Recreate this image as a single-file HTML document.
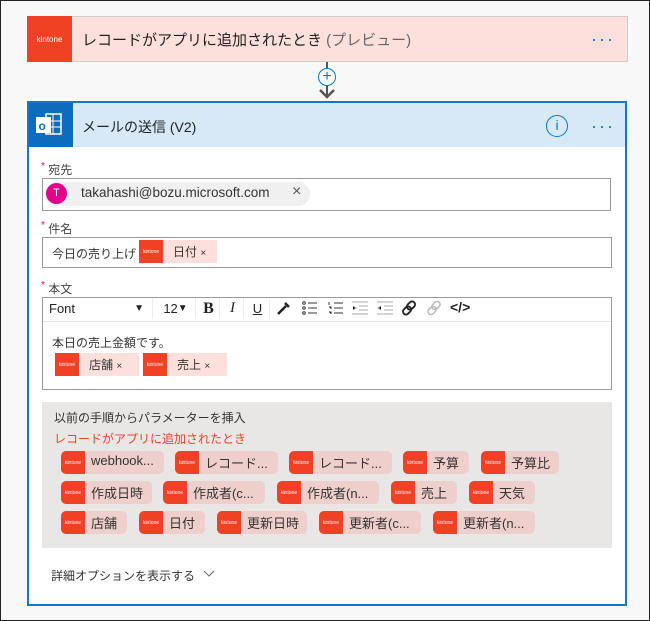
<!DOCTYPE html><html><head><meta charset="utf-8"><style>
*{box-sizing:border-box;margin:0;padding:0}
body{width:650px;height:621px;background:#f8f8f8;position:relative;font-family:"Liberation Sans","Noto Sans CJK JP",sans-serif;color:#333;overflow:hidden}
.a{position:absolute}
.kt{background:#f04125;color:#fff;font-size:5px;display:flex;align-items:center;justify-content:center}
.chip{position:absolute;height:23px;background:#efcfcb;border-radius:5px;overflow:hidden;font-size:13px;color:#333}
.chip .kt{position:absolute;left:0;top:0;width:24px;height:23px}
.chip span{position:absolute;left:30px;top:2px;white-space:nowrap}
.lbl{position:absolute;left:41px;font-size:12px;color:#444}
.lbl b{color:#e03;font-weight:normal;font-size:10px;vertical-align:top}
.tok{position:absolute;height:23px;background:#fde0dc;font-size:12px}
.tok .kt{position:absolute;left:0;top:0;width:24px;height:23px}
.tb{position:absolute;top:298px;height:21px;font-size:13px;color:#222;display:flex;align-items:center;justify-content:center;border-right:1px solid #eee}
</style></head><body>
<div class="a" style="left:0;top:0;width:650px;height:621px;border:1px solid #222"></div>
<div class="a" style="left:27px;top:16px;width:601px;height:46px;background:#fde0dc;border:1px solid #ccc"></div>
<div class="a kt" style="left:27px;top:16px;width:45px;height:46px;font-size:8px">kintone</div>
<div class="a" style="left:82px;top:29px;font-size:15px;color:#222">レコードがアプリに追加されたとき <span style="color:#666">(プレビュー)</span></div>
<div class="a" style="left:591px;top:29px;font-size:18px;color:#0078d4;letter-spacing:2px">···</div>
<div class="a" style="left:326px;top:62px;width:2px;height:34px;background:#555"></div>
<div class="a" style="left:318px;top:68px;width:18px;height:18px;border-radius:50%;border:1px solid #0078d4;background:#fff;color:#0078d4;font-size:16px;line-height:15px;text-align:center">+</div>
<svg class="a" style="left:318px;top:88px" width="18" height="12"><path d="M2 2l7 7 7-7" stroke="#555" stroke-width="2.5" fill="none"/></svg>
<div class="a" style="left:27px;top:101px;width:600px;height:505px;border:2px solid #0f78d4;background:#fff"></div>
<div class="a" style="left:29px;top:103px;width:596px;height:44px;background:#d7e8f7"></div>
<div class="a" style="left:29px;top:103px;width:44px;height:44px;background:#0f6cbd"></div>
<svg class="a" style="left:35px;top:111px" width="30" height="28"><rect x="11" y="3" width="15" height="20" fill="none" stroke="#fff" stroke-width="1.5"/><path d="M11 10h15M11 16h15M18 3v20" stroke="#fff"/><rect x="1" y="6" width="15" height="16" fill="#fff"/><text x="3.5" y="19" font-size="12" font-weight="bold" fill="#0f6cbd" font-family="Liberation Sans">o</text></svg>
<div class="a" style="left:82px;top:117px;font-size:14px;color:#222">メールの送信 (V2)</div>
<div class="a" style="left:546px;top:115px;width:22px;height:22px;border-radius:50%;border:1.5px solid #0078d4;color:#0078d4;font-size:14px;text-align:center;line-height:19px">i</div>
<div class="a" style="left:591px;top:116px;font-size:18px;color:#0078d4;letter-spacing:2px">···</div>
<div class="lbl" style="top:161px"><b>*</b> 宛先</div>
<div class="a" style="left:42px;top:178px;width:569px;height:33px;border:1px solid #999"></div>
<div class="a" style="left:45px;top:182px;width:265px;height:24px;background:#f0f0f0;border-radius:12px"></div>
<div class="a" style="left:46px;top:183px;width:21px;height:21px;border-radius:50%;background:#e3008c;color:#fff;font-size:11px;text-align:center;line-height:21px">T</div>
<div class="a" style="left:81px;top:185px;font-size:13.5px;color:#333">takahashi@bozu.microsoft.com</div>
<div class="a" style="left:292px;top:183px;font-size:16px;color:#555">×</div>
<div class="lbl" style="top:220px"><b>*</b> 件名</div>
<div class="a" style="left:42px;top:237px;width:570px;height:31px;border:1px solid #999"></div>
<div class="a" style="left:52px;top:245px;font-size:12px">今日の売り上げ</div>
<div class="tok" style="left:139px;top:240px;width:78px"><div class="kt">kintone</div><span class="a" style="left:34px;top:3px">日付 <small>×</small></span></div>
<div class="lbl" style="top:280px"><b>*</b> 本文</div>
<div class="a" style="left:42px;top:297px;width:570px;height:93px;border:1px solid #999"></div>
<div class="a" style="left:43px;top:321px;width:568px;height:1px;background:#e5e5e5"></div>
<div class="tb" style="left:43px;width:110px;justify-content:space-between;padding:0 8px 0 6px"><span>Font</span><span style="font-size:10px">▼</span></div>
<div class="tb" style="left:156px;width:40px">12 <span style="font-size:10px">▼</span></div>
<div class="tb" style="left:198px;width:22px;font-weight:bold;font-family:'Liberation Serif';font-size:16px">B</div>
<div class="tb" style="left:222px;width:22px;font-style:italic;font-family:'Liberation Serif';font-size:15px">I</div>
<div class="tb" style="left:246px;width:24px;text-decoration:underline">U</div>
<svg class="a" style="left:276px;top:300px" width="16" height="16"><path d="M2 14l8-8M9 3l4 4" stroke="#222" stroke-width="2.5"/></svg>
<svg class="a" style="left:301px;top:300px" width="18" height="16"><g stroke="#333"><circle cx="3" cy="3" r="1.3" fill="none"/><circle cx="3" cy="8" r="1.3" fill="none"/><circle cx="3" cy="13" r="1.3" fill="none"/><path d="M7 3h9M7 8h9M7 13h9"/></g></svg>
<svg class="a" style="left:327px;top:300px" width="18" height="16"><g stroke="#333"><path d="M7 3h9M7 8h9M7 13h9M2 2v3M2 7h2v2M2 12h2v2" stroke-width="1"/></g></svg>
<svg class="a" style="left:351px;top:300px" width="18" height="16"><g stroke="#aaa"><path d="M1 2h16M8 6h9M8 10h9M1 14h16M2 6l3 2-3 2"/></g></svg>
<svg class="a" style="left:376px;top:300px" width="18" height="16"><g stroke="#aaa"><path d="M1 2h16M8 6h9M8 10h9M1 14h16M5 6l-3 2 3 2"/></g></svg>
<svg class="a" style="left:400px;top:299px" width="18" height="18"><g stroke="#222" stroke-width="1.8" fill="none"><rect x="8" y="2" width="6" height="9" rx="3" transform="rotate(45 11 6.5)"/><rect x="4" y="7" width="6" height="9" rx="3" transform="rotate(45 7 11.5)"/></g></svg>
<svg class="a" style="left:425px;top:299px" width="18" height="18"><g stroke="#bbb" stroke-width="1.5" fill="none"><rect x="8" y="2" width="6" height="9" rx="3" transform="rotate(45 11 6.5)"/><rect x="4" y="7" width="6" height="9" rx="3" transform="rotate(45 7 11.5)"/></g></svg>
<div class="a" style="left:450px;top:299px;font-size:14px;font-weight:bold;color:#222">&lt;/&gt;</div>
<div class="a" style="left:52px;top:334px;font-size:12px">本日の売上金額です。</div>
<div class="tok" style="left:55px;top:353px;width:84px"><div class="kt">kintone</div><span class="a" style="left:34px;top:3px">店舗 <small>×</small></span></div>
<div class="tok" style="left:143px;top:353px;width:84px"><div class="kt">kintone</div><span class="a" style="left:34px;top:3px">売上 <small>×</small></span></div>
<div class="a" style="left:42px;top:402px;width:570px;height:146px;background:#e9e7e6"></div>
<div class="a" style="left:54px;top:409px;font-size:12px;color:#333">以前の手順からパラメーターを挿入</div>
<div class="a" style="left:54px;top:430px;font-size:12px;color:#f04125">レコードがアプリに追加されたとき</div>
<div class="chip" style="left:61px;top:451px;width:103px"><div class="kt">kintone</div><span>webhook...</span></div>
<div class="chip" style="left:175px;top:451px;width:103px"><div class="kt">kintone</div><span>レコード...</span></div>
<div class="chip" style="left:289px;top:451px;width:103px"><div class="kt">kintone</div><span>レコード...</span></div>
<div class="chip" style="left:403px;top:451px;width:66px"><div class="kt">kintone</div><span>予算</span></div>
<div class="chip" style="left:481px;top:451px;width:78px"><div class="kt">kintone</div><span>予算比</span></div>
<div class="chip" style="left:61px;top:481px;width:91px"><div class="kt">kintone</div><span>作成日時</span></div>
<div class="chip" style="left:163px;top:481px;width:102px"><div class="kt">kintone</div><span>作成者(c...</span></div>
<div class="chip" style="left:277px;top:481px;width:102px"><div class="kt">kintone</div><span>作成者(n...</span></div>
<div class="chip" style="left:391px;top:481px;width:66px"><div class="kt">kintone</div><span>売上</span></div>
<div class="chip" style="left:469px;top:481px;width:66px"><div class="kt">kintone</div><span>天気</span></div>
<div class="chip" style="left:61px;top:511px;width:66px"><div class="kt">kintone</div><span>店舗</span></div>
<div class="chip" style="left:139px;top:511px;width:66px"><div class="kt">kintone</div><span>日付</span></div>
<div class="chip" style="left:217px;top:511px;width:90px"><div class="kt">kintone</div><span>更新日時</span></div>
<div class="chip" style="left:319px;top:511px;width:102px"><div class="kt">kintone</div><span>更新者(c...</span></div>
<div class="chip" style="left:433px;top:511px;width:102px"><div class="kt">kintone</div><span>更新者(n...</span></div>
<div class="a" style="left:51px;top:567px;font-size:12px;color:#333">詳細オプションを表示する</div>
<svg class="a" style="left:203px;top:570px" width="12" height="8"><path d="M1 1l5 5 5-5" stroke="#666" fill="none"/></svg>
</body></html>
